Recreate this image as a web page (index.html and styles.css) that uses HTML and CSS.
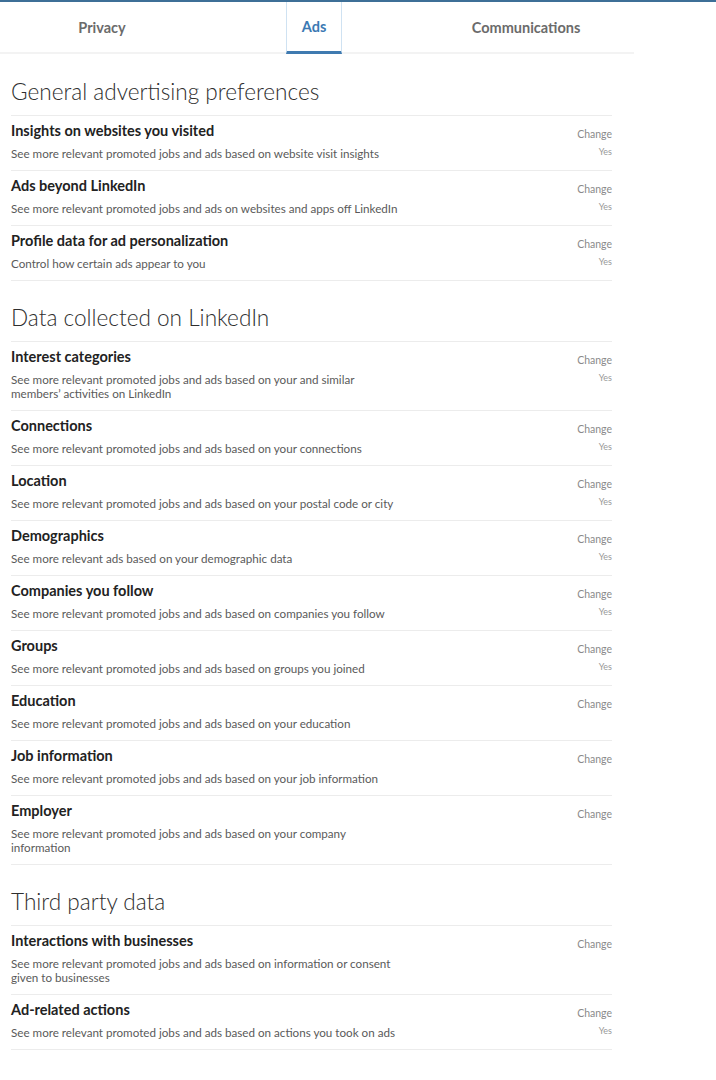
FILE: index.html
```html
<!DOCTYPE html>
<html>
<head>
<meta charset="utf-8">
<link rel="stylesheet" href="styles.css">
</head>
<body>
<div class="topline"></div>
<nav class="tabs">
  <div class="tab-grid">
    <div class="tab"><span class="tab-label">Privacy</span></div>
    <div class="tab"><span class="tab-label active">Ads</span></div>
    <div class="tab"><span class="tab-label">Communications</span></div>
  </div>
</nav>
<main class="content">
  <h2 class="section-title">General advertising preferences</h2>
  <ul class="list">
    <li class="row"><div class="text"><h3>Insights on websites you visited</h3><p>See more relevant promoted jobs and ads based on website visit insights</p></div><div class="meta"><span class="change">Change</span><span class="val">Yes</span></div></li>
    <li class="row"><div class="text"><h3>Ads beyond LinkedIn</h3><p>See more relevant promoted jobs and ads on websites and apps off LinkedIn</p></div><div class="meta"><span class="change">Change</span><span class="val">Yes</span></div></li>
    <li class="row"><div class="text"><h3>Profile data for ad personalization</h3><p>Control how certain ads appear to you</p></div><div class="meta"><span class="change">Change</span><span class="val">Yes</span></div></li>
  </ul>

  <h2 class="section-title">Data collected on LinkedIn</h2>
  <ul class="list">
    <li class="row"><div class="text"><h3>Interest categories</h3><p>See more relevant promoted jobs and ads based on your and similar<br>members’ activities on LinkedIn</p></div><div class="meta"><span class="change">Change</span><span class="val">Yes</span></div></li>
    <li class="row"><div class="text"><h3>Connections</h3><p>See more relevant promoted jobs and ads based on your connections</p></div><div class="meta"><span class="change">Change</span><span class="val">Yes</span></div></li>
    <li class="row"><div class="text"><h3>Location</h3><p>See more relevant promoted jobs and ads based on your postal code or city</p></div><div class="meta"><span class="change">Change</span><span class="val">Yes</span></div></li>
    <li class="row"><div class="text"><h3>Demographics</h3><p>See more relevant ads based on your demographic data</p></div><div class="meta"><span class="change">Change</span><span class="val">Yes</span></div></li>
    <li class="row"><div class="text"><h3>Companies you follow</h3><p>See more relevant promoted jobs and ads based on companies you follow</p></div><div class="meta"><span class="change">Change</span><span class="val">Yes</span></div></li>
    <li class="row"><div class="text"><h3>Groups</h3><p>See more relevant promoted jobs and ads based on groups you joined</p></div><div class="meta"><span class="change">Change</span><span class="val">Yes</span></div></li>
    <li class="row"><div class="text"><h3>Education</h3><p>See more relevant promoted jobs and ads based on your education</p></div><div class="meta"><span class="change">Change</span></div></li>
    <li class="row"><div class="text"><h3>Job information</h3><p>See more relevant promoted jobs and ads based on your job information</p></div><div class="meta"><span class="change">Change</span></div></li>
    <li class="row"><div class="text"><h3>Employer</h3><p>See more relevant promoted jobs and ads based on your company<br>information</p></div><div class="meta"><span class="change">Change</span></div></li>
  </ul>

  <h2 class="section-title">Third party data</h2>
  <ul class="list">
    <li class="row"><div class="text"><h3>Interactions with businesses</h3><p>See more relevant promoted jobs and ads based on information or consent<br>given to businesses</p></div><div class="meta"><span class="change">Change</span></div></li>
    <li class="row"><div class="text"><h3>Ad-related actions</h3><p>See more relevant promoted jobs and ads based on actions you took on ads</p></div><div class="meta"><span class="change">Change</span><span class="val">Yes</span></div></li>
  </ul>
</main>
</body>
</html>
```

FILE: styles.css
```css
* { box-sizing: border-box; }
html, body { margin: 0; padding: 0; background: #fff; }
body {
  font-family: "Lato", "Open Sans", sans-serif;
  color: #333;
  width: 716px;
  height: 1080px;
  overflow: hidden;
}
.topline { height: 2px; background: #3d6f97; }
.tabs {
  width: 634px;
  height: 52px;
  border-bottom: 2px solid #f3f3f3;
}
.tab-grid {
  width: 636px;
  margin-left: -4px;
  height: 50px;
  display: grid;
  grid-template-columns: 1fr 1fr 1fr;
}
.tab { display: flex; justify-content: center; }
.tab-label {
  display: flex;
  align-items: center;
  height: 52px;
  padding: 0 15px;
  font-size: 14.5px;
  font-weight: 700;
  color: #6b6b6b;
  border: 1px solid transparent;
  border-bottom: 3px solid transparent;
}
.tab-label.active {
  color: #3b79b3;
  border-color: #cfe2f2;
  border-top: none;
  border-bottom: 3px solid #3f7ab0;
}
.content { width: 612px; padding-left: 11px; }
.section-title {
  margin: 23px 0 8px;
  font-size: 22.6px;
  line-height: 30px;
  font-weight: 300;
  color: #2e2e2e;
}
.list + .section-title { margin-top: 22px; }
.list { list-style: none; margin: 0; padding: 0; }
.row {
  display: flex;
  justify-content: space-between;
  border-top: 1px solid #ececec;
  padding: 6px 0 9px;
}
.row:last-child { border-bottom: 1px solid #ececec; }
.row h3 {
  margin: 0;
  font-size: 14.5px;
  line-height: 18px;
  font-weight: 700;
  color: #222;
}
.row p {
  margin: 7px 0 0;
  font-size: 11.65px;
  line-height: 14px;
  color: #5a5a5a;
}
.meta {
  display: flex;
  flex-direction: column;
  align-items: flex-end;
  padding-top: 5px;
}
.change { font-size: 10.5px; line-height: 14px; color: #8a8a8a; }
.val { font-size: 9px; line-height: 12px; color: #999; margin-top: 5px; }
```
